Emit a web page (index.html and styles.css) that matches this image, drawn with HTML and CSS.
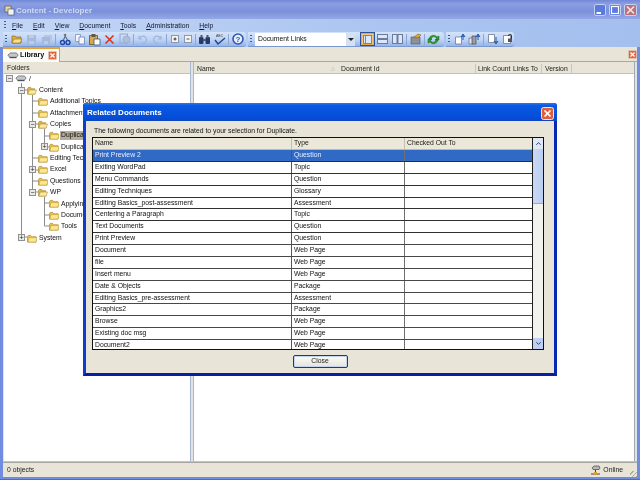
FILE: index.html
```html
<!DOCTYPE html>
<html lang="en">
<head>
<meta charset="utf-8">
<title>Content - Developer</title>
<link rel="stylesheet" href="styles.css">
</head>
<body>
<svg class="defs" width="0" height="0" aria-hidden="true">
  <defs>
    <symbol id="folder" viewBox="0 0 11 10">
      <path d="M.5 2.500V9h9.500V3H5L4 1.500H1.500z" fill="#eebc48" stroke="#a88a2e" stroke-width=".7"/>
      <path d="M1 9l1-5h9l-1 5z" fill="#fce690" stroke="#b8962e" stroke-width=".6"/>
    </symbol>
    <symbol id="folderopen" viewBox="0 0 11 10">
      <path d="M.5 2.500V9h8V3H5L4 1.500H1.500z" fill="#dcb24c" stroke="#a88a2e" stroke-width=".7"/>
      <path d="M.8 9 2.500 4.500h8L9 9z" fill="#fdeaa0" stroke="#a88a2e" stroke-width=".6"/>
    </symbol>
    <symbol id="drive" viewBox="0 0 14 8">
      <path d="M1 3.500 4 1h7l2 2.500-2 2.500H3z" fill="#c4c6c8" stroke="#55585c" stroke-width=".8"/>
      <path d="M3 6.500h8" stroke="#40464a" stroke-width="1.200"/>
    </symbol>
    <symbol id="redx" viewBox="0 0 11 11">
      <rect x=".5" y=".5" width="10" height="10" rx="1" fill="#e8623a" stroke="#d8d0c0"/>
      <path d="M3 3l5 5M8 3 3 8" stroke="#fff" stroke-width="1.600"/>
    </symbol>
  </defs>
</svg>
<div class="window">
  <header class="titlebar">
    <svg class="appicon" width="11" height="11" viewBox="0 0 11 11"><rect x="1" y="1" width="6" height="6" fill="#e8d8a0" stroke="#60584a" stroke-width=".7"/><rect x="4" y="4" width="6" height="6" fill="#f4f4f4" stroke="#50607a" stroke-width=".7"/></svg>
    <span class="titletext">Content - Developer</span>
    <span class="winbtns">
      <span class="winbtn"><svg width="10" height="10" viewBox="0 0 10 10"><path d="M1.500 8h4.500" stroke="#fff" stroke-width="2"/></svg></span>
      <span class="winbtn"><svg width="10" height="10" viewBox="0 0 10 10"><rect x="1.500" y="1.500" width="7" height="7" fill="none" stroke="#fff" stroke-width="1.200"/></svg></span>
      <span class="winbtn closebtn"><svg width="11" height="10" viewBox="0 0 11 10"><path d="M2 1.500l7 7M9 1.500l-7 7" stroke="#f4e4e4" stroke-width="1.700"/></svg></span>
    </span>
  </header>
  <nav class="menubar">
    <span class="grip"></span>
    <span class="menuitems">
      <span><u>F</u>ile</span><span><u>E</u>dit</span><span><u>V</u>iew</span><span><u>D</u>ocument</span><span><u>T</u>ools</span><span><u>A</u>dministration</span><span><u>H</u>elp</span>
    </span>
  </nav>
  <div class="rebar">
    <div class="toolbar tb1">
      <span class="grip"></span>
      <span class="tbtn"><svg width="12" height="12" viewBox="0 0 12 12"><path d="M1 3h3l1 1h5v6H1z" fill="#e0b040" stroke="#8a6a1e" stroke-width=".7"/><path d="M1 10l2-4h8l-2 4z" fill="#fbe08c" stroke="#8a6a1e" stroke-width=".6"/></svg></span>
      <span class="tbtn"><svg width="11" height="11" viewBox="0 0 11 11"><path d="M1 1h9v9H1z" fill="#a6b9da"/><path d="M3 1h5v3H3zM3 7h5v3H3z" fill="#bccbe6"/></svg></span>
      <span class="tbtn"><svg width="12" height="11" viewBox="0 0 12 11"><path d="M3 1h8v7H3z" fill="#b4c6e4"/><path d="M1 3h8v7H1z" fill="#a6b9da"/><path d="M3 7h4v3H3z" fill="#bccbe6"/></svg></span>
      <span class="tsep"></span>
      <span class="tbtn"><svg width="12" height="13" viewBox="0 0 12 13"><path d="M7 1 4.500 7M5 1l3.500 6" stroke="#5c6a80" stroke-width="1.100"/><circle cx="3.500" cy="9.500" r="2" fill="none" stroke="#1b45a8" stroke-width="1.400"/><circle cx="9" cy="9.500" r="2" fill="none" stroke="#1b45a8" stroke-width="1.400"/></svg></span>
      <span class="tbtn"><svg width="12" height="12" viewBox="0 0 12 12"><path d="M1.500 1.500h5v7h-5z" fill="#f4f6fa" stroke="#7a90bc" stroke-width=".8"/><path d="M5 4h5.500v7H5z" fill="#f4f6fa" stroke="#6a84b8" stroke-width=".8"/></svg></span>
      <span class="tbtn"><svg width="13" height="13" viewBox="0 0 13 13"><path d="M1.500 2.500h8v9h-8z" fill="#d8a84a" stroke="#6a5220" stroke-width=".8"/><path d="M3.500 1h4v3h-4z" fill="#60584a"/><path d="M6 6h6v6H6z" fill="#fff" stroke="#44506a" stroke-width=".8"/></svg></span>
      <span class="tbtn"><svg width="11" height="11" viewBox="0 0 11 11"><path d="M1.500 1.500l8 8M9.500 1.500l-8 8" stroke="#dc3418" stroke-width="1.600"/></svg></span>
      <span class="tbtn"><svg width="12" height="12" viewBox="0 0 12 12"><rect x="1" y="1" width="7.500" height="9" fill="none" stroke="#9aaac8"/><circle cx="7.500" cy="6.500" r="3.500" fill="#aebedb" stroke="#9aaac8" stroke-width=".8"/></svg></span>
      <span class="tsep"></span>
      <span class="tbtn"><svg width="11" height="11" viewBox="0 0 11 11"><path d="M2 2v3h3M2.500 5A3.500 3.500 0 1 1 5 9" fill="none" stroke="#9fb4da" stroke-width="1.200"/></svg></span>
      <span class="tbtn"><svg width="11" height="11" viewBox="0 0 11 11"><path d="M9 2v3H6M8.500 5A3.500 3.500 0 1 0 6 9" fill="none" stroke="#9fb4da" stroke-width="1.200"/></svg></span>
      <span class="tsep"></span>
      <span class="tbtn narrow"><svg width="8" height="8" viewBox="0 0 8 8"><rect x=".5" y=".5" width="7" height="7" fill="#f6f6f0" stroke="#8898b4"/><path d="M2.500 4h3M4 2.500v3" stroke="#333"/></svg></span>
      <span class="tbtn narrow"><svg width="8" height="8" viewBox="0 0 8 8"><rect x=".5" y=".5" width="7" height="7" fill="#f6f6f0" stroke="#8898b4"/><path d="M2.500 4h3" stroke="#555"/></svg></span>
      <span class="tsep"></span>
      <span class="tbtn"><svg width="13" height="11" viewBox="0 0 13 11"><rect x="1" y="3" width="4.500" height="7" rx="1" fill="#243a6c"/><rect x="7.500" y="3" width="4.500" height="7" rx="1" fill="#243a6c"/><path d="M2.500 1h2v3h-2zM8.500 1h2v3h-2zM5 5h3v2H5z" fill="#556"/></svg></span>
      <span class="tbtn"><svg width="14" height="13" viewBox="0 0 14 13"><text class="abc" x="3" y="4">ABC</text><path d="M2 7l3 4 7-6" fill="none" stroke="#1f4a8c" stroke-width="1.500"/></svg></span>
      <span class="tsep"></span>
      <span class="tbtn"><svg width="12" height="12" viewBox="0 0 12 12"><circle cx="6" cy="6" r="5" fill="#e8eefa" stroke="#2a58b8" stroke-width="1.600"/><text class="qm" x="6" y="8.700" text-anchor="middle">?</text></svg></span>
    </div>
    <div class="toolbar tb2">
      <span class="grip"></span>
      <span class="combo"><span class="combotext">Document Links</span><span class="comboarrow"><svg width="6" height="3" viewBox="0 0 6 3"><path d="M0 0h6L3 3z" fill="#222"/></svg></span></span>
      <span class="tbtn selected first"><svg width="9" height="9" viewBox="0 0 9 9"><rect x=".5" y=".5" width="8" height="8" fill="#dce8fa" stroke="#7088b0"/><path d="M2.500 1v7" stroke="#7088b0"/></svg></span>
      <span class="tbtn"><svg width="11" height="10" viewBox="0 0 11 10"><rect x=".5" y=".5" width="10" height="9" fill="#dce6f8" stroke="#6a7c9c"/><path d="M1 5h9" stroke="#6a7c9c" stroke-width="2"/></svg></span>
      <span class="tbtn"><svg width="11" height="10" viewBox="0 0 11 10"><rect x=".5" y=".5" width="10" height="9" fill="#dce6f8" stroke="#6a7c9c"/><path d="M5.500 1v8" stroke="#6a7c9c" stroke-width="2"/></svg></span>
      <span class="tsep"></span>
      <span class="tbtn"><svg width="12" height="12" viewBox="0 0 12 12"><path d="M1 4h9v7H1z" fill="#8d8f9a" stroke="#555" stroke-width=".6"/><path d="M4 4l4-3 3 1-3 3z" fill="#e0a828" stroke="#8a6a1e" stroke-width=".6"/></svg></span>
      <span class="tsep"></span>
      <span class="tbtn"><svg width="13" height="13" viewBox="0 0 13 13"><path d="M2 6a4.500 4.500 0 0 1 8-2l2-1v4H8l1.500-1.300A2.800 2.800 0 0 0 4 6.500z" fill="#30a030" stroke="#106010" stroke-width=".5"/><path d="M11 7a4.500 4.500 0 0 1-8 2l-2 1V6h4L3.500 7.300A2.800 2.800 0 0 0 9 6.500z" fill="#30a030" stroke="#106010" stroke-width=".5"/></svg></span>
    </div>
    <div class="toolbar tb3">
      <span class="grip"></span>
      <span class="tbtn"><svg width="12" height="12" viewBox="0 0 12 12"><path d="M1.500 4h6v7h-6z" fill="#fff" stroke="#66789a" stroke-width=".8"/><path d="M9 7V3M7 4l2-3 2 3" fill="#3b78cc" stroke="#2458a8" stroke-width="1"/></svg></span>
      <span class="tbtn"><svg width="13" height="12" viewBox="0 0 13 12"><path d="M1 5h4v6H1z" fill="#e8e8ec" stroke="#66789a" stroke-width=".8"/><path d="M4 3h4v8H4z" fill="#9a9ca6" stroke="#555" stroke-width=".8"/><path d="M10 7V3M8 4l2-3 2 3" fill="#3b78cc" stroke="#2458a8" stroke-width="1"/></svg></span>
      <span class="tsep"></span>
      <span class="tbtn"><svg width="12" height="13" viewBox="0 0 12 13"><path d="M1.500 1.500h6v8h-6z" fill="#fff" stroke="#66789a" stroke-width=".8"/><path d="M9 4v4M7 8l2 3 2-3" fill="#3b78cc" stroke="#2458a8" stroke-width="1"/></svg></span>
      <span class="tbtn"><svg width="12" height="12" viewBox="0 0 12 12"><path d="M1.500 2.500h7v8h-7z" fill="#fff" stroke="#66789a" stroke-width=".8"/><path d="M6 3a2 2 0 0 1 4 0v3H9V3a1 1 0 0 0-2 0z" fill="#333"/><rect x="6" y="5.500" width="4" height="3.500" fill="#555"/></svg></span>
    </div>
  </div>
  <div class="tabstrip">
    <span class="tab">
      <svg class="tabicon" width="12" height="7"><use href="#drive"/></svg>
      <span class="tablabel">Library</span>
      <svg class="tabclose" width="9" height="9"><use href="#redx"/></svg>
    </span>
    <svg class="stripclose" width="9" height="9"><use href="#redx"/></svg>
  </div>
  <main class="panes">
    <section class="leftpane">
      <div class="paneheader">Folders</div>
      <div class="tree">
        <svg class="treelines" width="186" height="200" aria-hidden="true">
          <path d="M21.500 12V166M32.500 24V121M44.500 58V76M44.500 126V155M21.500 19h6M21.500 166h6M32.500 30h6M32.500 42h6M32.500 53h6M32.500 87h6M32.500 99h6M32.500 110h6M32.500 121h6M44.500 65h5M44.500 76h5M44.500 132h5M44.500 144h5M44.500 155h5" fill="none" stroke="#8c8c8c"/>
        </svg>
        <div class="node l0"><span class="exp">&#8722;</span><svg class="ico drv" width="12" height="7"><use href="#drive"/></svg><span>/</span></div>
        <div class="node l1"><span class="exp">&#8722;</span><svg class="ico" width="10" height="9"><use href="#folderopen"/></svg><span>Content</span></div>
        <div class="node l2"><svg class="ico" width="10" height="9"><use href="#folder"/></svg><span>Additional Topics</span></div>
        <div class="node l2"><svg class="ico" width="10" height="9"><use href="#folder"/></svg><span>Attachments</span></div>
        <div class="node l2"><span class="exp">&#8722;</span><svg class="ico" width="10" height="9"><use href="#folderopen"/></svg><span>Copies</span></div>
        <div class="node l3"><svg class="ico" width="10" height="9"><use href="#folder"/></svg><span class="sel">Duplica</span></div>
        <div class="node l3"><span class="exp">+</span><svg class="ico" width="10" height="9"><use href="#folder"/></svg><span>Duplica</span></div>
        <div class="node l2"><svg class="ico" width="10" height="9"><use href="#folder"/></svg><span>Editing Tec</span></div>
        <div class="node l2"><span class="exp">+</span><svg class="ico" width="10" height="9"><use href="#folder"/></svg><span>Excel</span></div>
        <div class="node l2"><svg class="ico" width="10" height="9"><use href="#folder"/></svg><span>Questions</span></div>
        <div class="node l2"><span class="exp">&#8722;</span><svg class="ico" width="10" height="9"><use href="#folderopen"/></svg><span>WP</span></div>
        <div class="node l3"><svg class="ico" width="10" height="9"><use href="#folder"/></svg><span>Applyin</span></div>
        <div class="node l3"><svg class="ico" width="10" height="9"><use href="#folder"/></svg><span>Docume</span></div>
        <div class="node l3"><svg class="ico" width="10" height="9"><use href="#folder"/></svg><span>Tools</span></div>
        <div class="node l1"><span class="exp">+</span><svg class="ico" width="10" height="9"><use href="#folder"/></svg><span>System</span></div>
      </div>
    </section>
    <section class="rightpane">
      <div class="paneheader columns">
        <span class="col c-name">Name</span>
        <span class="sortmark">&#9651;</span>
        <span class="col c-id">Document Id</span>
        <span class="col c-count">Link Count</span>
        <span class="col c-to">Links To</span>
        <span class="col c-ver">Version</span>
      </div>
    </section>
  </main>
  <footer class="statusbar">
    <span>0 objects</span>
    <span class="online">
      <svg width="11" height="10" viewBox="0 0 11 10"><path d="M2 3l2-2h5l1 2-1 1.500H3z" fill="#b8b8b8" stroke="#444" stroke-width=".7"/><path d="M5.500 5v3M1 9h9" stroke="#444"/><rect x="4" y="7" width="3" height="2.500" fill="#e0a020"/></svg>
      <span>Online</span>
    </span>
    <span class="sizegrip"></span>
  </footer>
</div>

<section class="dialog">
  <header class="dlgtitle">
    <span>Related Documents</span>
    <svg width="13" height="13" viewBox="0 0 13 13"><rect x=".5" y=".5" width="12" height="12" rx="2" fill="#e0603c" stroke="#f0e8e0"/><path d="M3.500 3.500l6 6M9.500 3.500l-6 6" stroke="#fff" stroke-width="1.700"/></svg>
  </header>
  <div class="dlgbody">
    <p class="dlgmsg">The following documents are related to your selection for Duplicate.</p>
    <div class="grid">
      <div class="gridmain">
        <div class="row head"><span class="cell n">Name</span><span class="cell t">Type</span><span class="cell o">Checked Out To</span></div>
        <div class="row active"><span class="cell n">Print Preview 2</span><span class="cell t">Question</span><span class="cell o"></span></div>
        <div class="row"><span class="cell n">Exiting WordPad</span><span class="cell t">Topic</span><span class="cell o"></span></div>
        <div class="row"><span class="cell n">Menu Commands</span><span class="cell t">Question</span><span class="cell o"></span></div>
        <div class="row"><span class="cell n">Editing Techniques</span><span class="cell t">Glossary</span><span class="cell o"></span></div>
        <div class="row"><span class="cell n">Editing Basics_post-assessment</span><span class="cell t">Assessment</span><span class="cell o"></span></div>
        <div class="row"><span class="cell n">Centering a Paragraph</span><span class="cell t">Topic</span><span class="cell o"></span></div>
        <div class="row"><span class="cell n">Text Documents</span><span class="cell t">Question</span><span class="cell o"></span></div>
        <div class="row"><span class="cell n">Print Preview</span><span class="cell t">Question</span><span class="cell o"></span></div>
        <div class="row"><span class="cell n">Document</span><span class="cell t">Web Page</span><span class="cell o"></span></div>
        <div class="row"><span class="cell n">file</span><span class="cell t">Web Page</span><span class="cell o"></span></div>
        <div class="row"><span class="cell n">Insert menu</span><span class="cell t">Web Page</span><span class="cell o"></span></div>
        <div class="row"><span class="cell n">Date &amp; Objects</span><span class="cell t">Package</span><span class="cell o"></span></div>
        <div class="row"><span class="cell n">Editing Basics_pre-assessment</span><span class="cell t">Assessment</span><span class="cell o"></span></div>
        <div class="row"><span class="cell n">Graphics2</span><span class="cell t">Package</span><span class="cell o"></span></div>
        <div class="row"><span class="cell n">Browse</span><span class="cell t">Web Page</span><span class="cell o"></span></div>
        <div class="row"><span class="cell n">Existing doc msg</span><span class="cell t">Web Page</span><span class="cell o"></span></div>
        <div class="row"><span class="cell n">Document2</span><span class="cell t">Web Page</span><span class="cell o"></span></div>
      </div>
      <div class="scrollbar">
        <span class="sbtn"><svg width="5" height="3" viewBox="0 0 5 3"><path d="M.3 2.700 2.500.7l2.200 2" fill="none" stroke="#34466c" stroke-width="1"/></svg></span>
        <span class="thumb"></span>
        <span class="strack"></span>
        <span class="sbtn low"><svg width="5" height="3" viewBox="0 0 5 3"><path d="M.3.300l2.200 2 2.200-2" fill="none" stroke="#34466c" stroke-width="1"/></svg></span>
      </div>
    </div>
    <div class="dlgfoot"><span class="button">Close</span></div>
  </div>
</section>
</body>
</html>
```
FILE: styles.css
```css
* { box-sizing: border-box; }
html, body { margin: 0; padding: 0; }
body {
  position: relative;
  width: 640px;
  height: 480px;
  overflow: hidden;
  font: 6.8px/1 "Liberation Sans", Arial, sans-serif;
  color: #101010;
  background: #fff;
}
.defs { position: absolute; }
svg { display: block; flex: none; }

.window {
  width: 640px;
  height: 480px;
  display: flex;
  flex-direction: column;
  background: #6f8ce0;
  padding: 0 3px 2px 3px;
  border-bottom: 1px solid #4a6cd0;
  filter: blur(.4px);
}

.titlebar {
  height: 19px;
  margin: 0 -3px;
  padding: 1px 3px 0 4px;
  display: flex;
  align-items: center;
  background: linear-gradient(#7088d8 0, #8a9ee2 20%, #7a90da 60%, #94a8e6 100%);
}
.appicon { margin-right: 1px; }
.titletext { font-size: 8px; font-weight: bold; color: #cfdaf4; margin-top: 1px; }
.winbtns { margin-left: auto; display: flex; gap: 3px; }
.winbtn {
  width: 12px; height: 12px;
  border: 1px solid #c4d0f0;
  border-radius: 2px;
  background: #5a7ae0;
  display: flex; align-items: center; justify-content: center;
}
.closebtn { width: 13px; background: #b8707c; }

.menubar {
  height: 13px;
  margin: 0 -3px;
  padding-left: 4px;
  display: flex;
  align-items: center;
  background: linear-gradient(90deg, #c3d6f5, #abc5f0 60%, #a4bfee);
  color: #101830;
}
.menuitems { display: flex; gap: 10px; margin-left: 6px; margin-top: 2px; }
.grip {
  width: 2px; height: 9px; flex: none;
  background: repeating-linear-gradient(#3c5ca0 0 1px, transparent 1px 3px);
}

.rebar {
  height: 15px;
  margin: 0 -3px;
  padding-left: 3px;
  display: flex;
  background: linear-gradient(90deg, #c3d6f5, #abc5f0 60%, #a4bfee);
}
.toolbar {
  height: 15px;
  display: flex;
  align-items: center;
  border-radius: 0 3px 3px 0;
  background: linear-gradient(#d4e3fa, #bed3f5 55%, #96b4e8);
  border-bottom: 1px solid #7a98d0;
}
.toolbar > .grip { margin: 0 2px 0 2px; }
.tb1 { width: 243px; }
.tb2 { width: 196px; margin-left: 2px; }
.tb3 { width: 68px; margin-left: 2px; }
.tbtn {
  width: 15px; height: 14px; flex: none;
  display: flex; align-items: center; justify-content: center;
}
.narrow { width: 13px; }
.tsep { width: 1px; height: 11px; margin: 0 1px; background: #8ea6d2; flex: none; }
.selected {
  background: #f3c684;
  border: 1px solid #2f5296;
  box-shadow: inset 0 0 0 1px #eea63e;
}
.first { margin-left: 5px; }
.combo {
  width: 100px; height: 13px; margin-left: 1px;
  background: #fff;
  display: flex; align-items: center; justify-content: space-between;
  padding-left: 3px;
  color: #101010;
}
.comboarrow {
  width: 9px; height: 13px;
  display: flex; align-items: center; justify-content: center;
  background: #d4e0f4;
}
.abc { font-size: 3.500px; fill: #444; }
.qm { font-size: 8px; font-weight: bold; fill: #2a58b8; }

.tabstrip {
  height: 15px;
  display: flex;
  justify-content: space-between;
  align-items: center;
  background: #e8e5d8;
  border-bottom: 1px solid #a8a89c;
}
.tab {
  width: 57px; height: 15px;
  display: flex; align-items: center;
  padding-left: 4px;
  background: #fbfbf7;
  border-top: 2px solid #e8a030;
  border-right: 1px solid #a8a89c;
}
.tabicon { margin-top: 1px; }
.tablabel { font-weight: bold; font-size: 7.200px; margin-left: 1px; color: #101010; }
.tabclose { margin-left: 4px; }

.panes {
  flex: 1; min-height: 0;
  display: flex; gap: 2px;
  background: #dfe3e8;
  border-bottom: 1px solid #b8c4d4;
}
.leftpane {
  width: 187px; margin-left: 1px;
  display: flex; flex-direction: column;
  background: #fff;
  border-right: 1px solid #a8b8d0;
}
.rightpane {
  flex: 1;
  display: flex; flex-direction: column;
  background: #fff;
  border-left: 1px solid #a8b8d0;
  border-right: 1px solid #a0a8b0;
  margin-right: 2px;
}
.paneheader {
  height: 12px; flex: none;
  display: flex; align-items: center;
  padding: 1px 0 0 3px;
  background: #e8e5d8;
  border-bottom: 1px solid #c4c2b4;
  color: #202020;
}
.col { flex: none; padding-left: 3px; border-right: 1px solid #c8c6b8; line-height: 9px; }
.c-name { width: 134px; border: 0; padding-left: 0; }
.sortmark { width: 10px; color: #b0aea0; font-size: 5px; flex: none; }
.c-id { width: 135px; border-right: 1px solid #c8c6b8; padding-left: 0; }
.c-count { width: 34px; padding-left: 2px; white-space: nowrap; border: 0; }
.c-to { width: 32px; }
.c-ver { width: 30px; }

.tree { position: relative; flex: 1; background: #fff; }
.treelines { position: absolute; left: -4px; top: -3px; }
.node {
  position: relative;
  height: 11.360px;
  display: flex; align-items: center;
  white-space: nowrap;
  color: #101010;
}
.node .exp {
  position: absolute; top: 2px;
  width: 7px; height: 7px;
  border: 1px solid #909090;
  background: #e8e8e4;
  font-size: 7px; line-height: 5px; text-align: center; color: #222;
}
.l0 { padding-left: 11px; margin-top: -.7px; }
.l1 { padding-left: 23px; }
.l2 { padding-left: 34px; }
.l3 { padding-left: 45px; }
.l0 .exp { left: 2px; }
.l1 .exp { left: 14px; }
.l2 .exp { left: 25px; }
.l3 .exp { left: 37px; }
.ico { margin-right: 2px; }
.sel { background: #b4ac9c; margin-left: -1px; padding: 1px 2px 1px 1px; color: #101010; }

.statusbar {
  height: 15px; flex: none;
  display: flex; align-items: center;
  padding-left: 4px;
  background: #e8e5d8;
  border-top: 1px solid #a8a8a0;
  color: #202020;
}
.online { margin-left: auto; display: flex; align-items: center; gap: 2px; }
.sizegrip {
  width: 7px; height: 6px;
  margin-left: 7px;
  align-self: flex-end;
  background: repeating-linear-gradient(135deg, transparent 0 2px, #b0ac9c 2px 3px);
}

.dialog {
  position: absolute;
  left: 83px; top: 103px;
  width: 474px; height: 273px;
  display: flex; flex-direction: column;
  background: #e8e5d8;
  border-radius: 3px 3px 0 0;
  border: solid #0a3ed0;
  border-width: 0 3px 3px 3px;
  border-bottom-color: #0820a0;
  border-right-color: #0828b4;
  filter: blur(.4px);
}
.dlgtitle {
  height: 18px; flex: none;
  margin: 0 -3px;
  padding: 2px 3px 0 4px;
  display: flex; align-items: center; justify-content: space-between;
  background: linear-gradient(#2a78ec 0, #0a58e0 15%, #0450dc 70%, #0a46c8 100%);
  border-radius: 3px 3px 0 0;
  color: #fff;
  font-size: 8px;
  font-weight: bold;
}
.dlgbody { flex: 1; padding: 0 10px 0 6px; display: flex; flex-direction: column; }
.dlgmsg { margin: 6px 0 2px 2px; height: 8px; line-height: 8px; color: #101010; }
.grid {
  width: 452px; height: 213px;
  display: flex;
  border: 1px solid #101010;
  background: #fff;
}
.gridmain { flex: 1; min-width: 0; display: flex; flex-direction: column; overflow: hidden; }
.row { height: 11.875px; display: flex; border-bottom: 1px solid #303030; flex: none; }
.row:nth-child(n+9) { border-bottom-color: #484848; }
.head { height: 12px; background: #ebe8da; border-bottom: 1px solid #bcbaac; color: #202020; }
.active { background: #316ac5; color: #e8eefc; border-bottom-color: #20304c; }
.cell { display: flex; align-items: center; padding-left: 2px; white-space: nowrap; overflow: hidden; }
.n { width: 198px; }
.t { width: 113px; border-left: 1px solid #555; }
.o { flex: 1; border-left: 1px solid #707070; }
.head .t, .head .o { border-left-color: #c0beb0; }
.scrollbar {
  width: 11px; flex: none;
  display: flex; flex-direction: column;
  border-left: 1px solid #202020;
  background: #f2f2ee;
}
.sbtn {
  height: 11px; flex: none;
  display: flex; align-items: center; justify-content: center;
  background: #e0e8f6;
}
.low { background: #bdd0f4; }
.thumb {
  height: 55px; flex: none;
  background: linear-gradient(90deg, #c8d8f6, #bccff2);
  border-bottom: 1px solid #96aad8;
}
.strack { flex: 1; }
.dlgfoot { display: flex; justify-content: center; padding: 5px 0 0 4px; }
.button {
  width: 55px; height: 13px;
  display: flex; align-items: center; justify-content: center;
  border: 1px solid #1c3c78;
  border-radius: 2px;
  background: linear-gradient(#fbfbf8, #e6e4da);
  box-shadow: inset 0 0 0 1px #c4d4f0;
  color: #202020;
}
```
